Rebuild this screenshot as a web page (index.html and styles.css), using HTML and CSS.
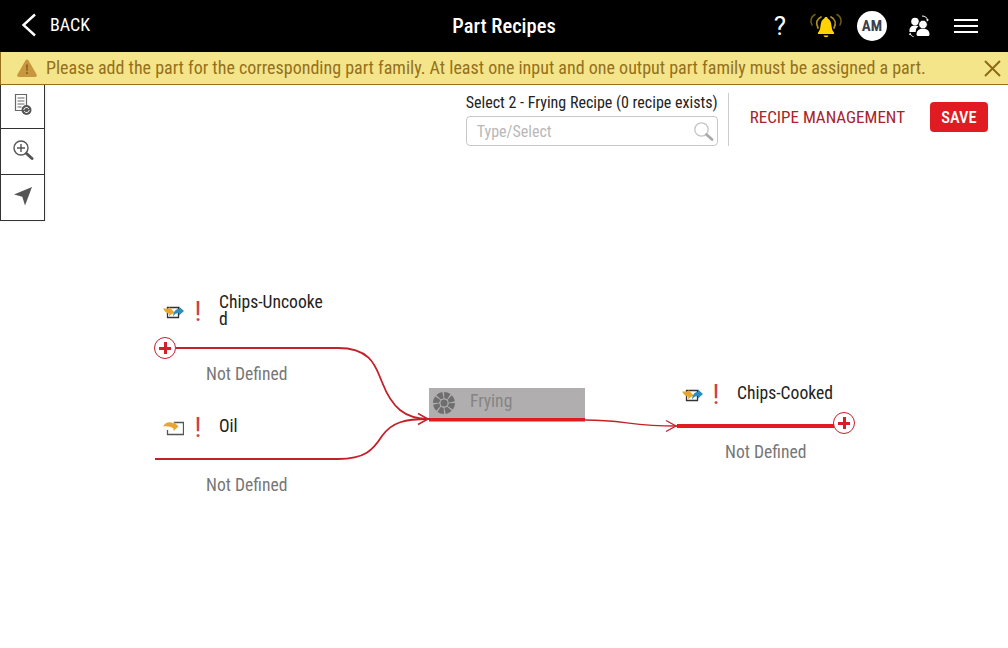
FILE: index.html
```html
<!DOCTYPE html>
<html lang="en">
<head>
<meta charset="utf-8">
<title>Part Recipes</title>
<link rel="stylesheet" href="styles.css">
</head>
<body>
<header class="topbar">
  <div class="back">
    <svg class="back-icon" width="16" height="24" viewBox="0 0 16 24"><path d="M14 1.500 2.500 12 14 22.500" fill="none" stroke="#fff" stroke-width="2.400"/></svg>
    <span class="back-label">BACK</span>
  </div>
  <h1 class="title">Part Recipes</h1>
  <div class="top-actions">
    <span class="help">?</span>
    <svg class="bell" width="34" height="26" viewBox="0 0 34 26">
      <g fill="none" stroke-linecap="round">
        <path d="M6 1.500C2 3.500.8 8 3 12M28 1.500C32 3.500 33.200 8 31 12" stroke="#6f5f1f" stroke-width="1.500"/>
        <path d="M12 4C8 6 6.500 10 9 15M22 4C26 6 27.500 10 25 15" stroke="#b2921e" stroke-width="1.700"/>
      </g>
      <path d="M17 4c1 0 1.600.7 1.800 1.600 2.500 1.200 3.300 3.900 3.700 7.400.3 2.800 1 5 2.500 6.500V21H9v-1.500c1.500-1.500 2.200-3.700 2.500-6.500.4-3.500 1.200-6.200 3.700-7.400C15.400 4.700 16 4 17 4z" fill="#ffd200"/>
      <path d="M14.500 22.500h5a2.500 1.800 0 0 1-5 0z" fill="#ffd200"/>
    </svg>
    <span class="avatar">AM</span>
    <svg class="people" width="24" height="24" viewBox="0 0 24 24">
      <circle cx="8" cy="7.500" r="3.800" fill="#fff"/>
      <path d="M2.500 18c-.5-4.500 2-6.500 5.500-6.500 1.500 0 2.500.3 3.300 1-1.700 1-2.600 2.800-2.600 5.500z" fill="#fff"/>
      <circle cx="16" cy="10.500" r="4.300" fill="#fff" stroke="#000" stroke-width=".8"/>
      <path d="M9.500 20.500c0-4 2.700-5.700 6.500-5.700s6.500 1.700 6.500 5.700c0 1-1 1.500-2 1.500h-9c-1 0-2-.5-2-1.500z" fill="#fff"/>
      <path d="M15 2c3 0 5 1.300 5.500 4M3 20c.8 1.200 1.800 2.300 3.500 2.600" fill="none" stroke="#fff" stroke-width="1"/>
      <path d="M19 5.500h3l-1.500 2zM2 21l1-2.500 1.500 2z" fill="#fff"/>
    </svg>
    <span class="burger"><i></i><i></i><i></i></span>
  </div>
</header>

<div class="banner">
  <svg class="warn" width="22" height="20" viewBox="0 0 22 20">
    <path d="M11 1.500c.7 0 1.200.4 1.600 1l8 14c.6 1.200-.1 2.500-1.400 2.500H2.800c-1.300 0-2-1.300-1.400-2.500l8-14c.4-.6.900-1 1.600-1z" fill="#c8963f"/>
    <path d="M10.200 6.500h1.600l-.3 6.500h-1zM10.200 14.200h1.600v1.800h-1.600z" fill="#7b5a17"/>
  </svg>
  <p class="banner-text"><span class="cond">Please add the part for the corresponding part family. At least one input and one output part family must be assigned a part.</span></p>
  <svg class="close" width="17" height="17" viewBox="0 0 17 17"><path d="M1 1 16 16M16 1 1 16" stroke="#8f6a14" stroke-width="2" fill="none"/></svg>
</div>

<main class="workspace">
  <div class="top-row">
    <nav class="tools">
      <button class="tool" type="button" aria-label="Recipe list">
        <svg width="20" height="24" viewBox="0 0 20 24">
          <path d="M2.500 1.500h11v16h-11z" fill="#fff" stroke="#666" stroke-width="1.200"/>
          <path d="M4.500 5h7M4.500 8h7M4.500 11h7M4.500 14h4" stroke="#666" stroke-width="1.200"/>
          <circle cx="13.500" cy="17" r="5" fill="#555"/>
          <path d="M10.800 17a2.700 2.700 0 0 1 5-1.200M16.200 17a2.700 2.700 0 0 1-5 1.200" stroke="#fff" stroke-width="1" fill="none"/>
        </svg>
      </button>
      <button class="tool" type="button" aria-label="Zoom">
        <svg width="22" height="22" viewBox="0 0 22 22">
          <circle cx="9" cy="9" r="7" fill="none" stroke="#555" stroke-width="1.400"/>
          <path d="M5 9h8M9 5v8" stroke="#555" stroke-width="1.400"/>
          <path d="M14.500 14.500l5.500 5" stroke="#555" stroke-width="3" stroke-linecap="round"/>
        </svg>
      </button>
      <button class="tool" type="button" aria-label="Navigate">
        <svg width="20" height="20" viewBox="0 0 20 20"><path d="M19 1 1 8.500l8.300 2.300L12 19.500z" fill="#555"/></svg>
      </button>
    </nav>
    <div class="controls">
      <div class="recipe-select">
        <label class="recipe-label"><span class="cond">Select 2 - Frying Recipe (0 recipe exists)</span></label>
        <div class="field">
          <span class="placeholder cond">Type/Select</span>
          <svg width="21" height="21" viewBox="0 0 21 21">
            <circle cx="8.500" cy="8.500" r="6.700" fill="none" stroke="#c4c4c4" stroke-width="1.300"/>
            <path d="M13.500 13.500l5.500 5" stroke="#aaa" stroke-width="2.800" stroke-linecap="round"/>
          </svg>
        </div>
      </div>
      <span class="divider"></span>
      <a class="manage"><span class="cond">RECIPE MANAGEMENT</span></a>
      <button class="save" type="button"><span class="cond">SAVE</span></button>
    </div>
  </div>

  <section class="diagram">
    <svg class="wires" width="1008" height="648" viewBox="0 0 1008 648">
      <g fill="none" stroke="#c4202a" stroke-width="1.800">
        <path d="M176 348H338C372 348 376 368 382 382C392 408 405 419 429 419"/>
        <path d="M155 459H338C365 459 373 450 382 436C392 422 405 419 429 419"/>
        <path d="M585 420C625 420 630 426 677 426" stroke-width="1.300"/>
        <path d="M418 413.500 428 419 418 424.500" stroke-width="1.500"/>
        <path d="M666 420.500 676 426 666 431.500" stroke-width="1.300"/>
      </g>
      <path d="M677 426H834" stroke="#e01b22" stroke-width="4"/>
      <path d="M429 419.500H585" stroke="#e01b22" stroke-width="4"/>
    </svg>

    <button class="plus plus-in" type="button" aria-label="Add input"></button>
    <button class="plus plus-out" type="button" aria-label="Add output"></button>

    <div class="node node-chips">
      <svg class="part-icon" width="21" height="16" viewBox="0 0 21 16">
        <path d="M4.500 3.500h11v10h-11z" fill="#fff" stroke="#333" stroke-width="1.300"/>
        <path d="M0 4.500h6L6.500 3l5 5.500-5.500 3.500.3-2.500C4 9.500 1.500 7.500 0 4.500z" fill="#e8a52f"/>
        <path d="M10 12.500C10.500 7.500 12.500 5 16 5V2.500L21 7l-5 4.500V9c-2.500 0-4.500 1-6 3.500z" fill="#2a8dbd"/>
      </svg>
      <span class="alert">!</span>
      <span class="part-name name-wrap cond">Chips-Uncooke<br>d</span>
    </div>
    <span class="undef undef-1 cond">Not Defined</span>

    <div class="node node-oil">
      <svg class="part-icon" width="21" height="16" viewBox="0 0 21 16">
        <path d="M11 2.500h9.500v12H4.500V10" fill="none" stroke="#555" stroke-width="1.300"/>
        <path d="M0 6.500C2 2.500 7 1 10.500 3.500V1.500L15.500 6.500 10.500 11V8.500C8 6.500 4 6 0 6.500z" fill="#e8a52f"/>
      </svg>
      <span class="alert">!</span>
      <span class="part-name cond">Oil</span>
    </div>
    <span class="undef undef-2 cond">Not Defined</span>

    <div class="process">
      <svg width="24" height="24" viewBox="0 0 24 24" class="shutter">
        <circle cx="12" cy="12" r="3.500" fill="#6e6e6e"/>
        <g fill="#6e6e6e">
          <path d="M12 1a11 11 0 0 1 6.500 2.100L15 8.500c-.8-.7-1.700-1.200-2.700-1.400z"/>
          <path d="M12 1a11 11 0 0 1 6.500 2.100L15 8.500c-.8-.7-1.700-1.200-2.700-1.400z" transform="rotate(45 12 12)"/>
          <path d="M12 1a11 11 0 0 1 6.500 2.100L15 8.500c-.8-.7-1.700-1.200-2.700-1.400z" transform="rotate(90 12 12)"/>
          <path d="M12 1a11 11 0 0 1 6.500 2.100L15 8.500c-.8-.7-1.700-1.200-2.700-1.400z" transform="rotate(135 12 12)"/>
          <path d="M12 1a11 11 0 0 1 6.500 2.100L15 8.500c-.8-.7-1.700-1.200-2.700-1.400z" transform="rotate(180 12 12)"/>
          <path d="M12 1a11 11 0 0 1 6.500 2.100L15 8.500c-.8-.7-1.700-1.200-2.700-1.400z" transform="rotate(225 12 12)"/>
          <path d="M12 1a11 11 0 0 1 6.500 2.100L15 8.500c-.8-.7-1.700-1.200-2.700-1.400z" transform="rotate(270 12 12)"/>
          <path d="M12 1a11 11 0 0 1 6.500 2.100L15 8.500c-.8-.7-1.700-1.200-2.700-1.400z" transform="rotate(315 12 12)"/>
        </g>
      </svg>
      <span class="process-name cond">Frying</span>
    </div>

    <div class="node node-cooked">
      <svg class="part-icon" width="21" height="16" viewBox="0 0 21 16">
        <path d="M4.500 3.500h11v10h-11z" fill="#fff" stroke="#333" stroke-width="1.300"/>
        <path d="M0 4.500h6L6.500 3l5 5.500-5.500 3.500.3-2.500C4 9.500 1.500 7.500 0 4.500z" fill="#e8a52f"/>
        <path d="M10 12.500C10.500 7.500 12.500 5 16 5V2.500L21 7l-5 4.500V9c-2.500 0-4.500 1-6 3.500z" fill="#2a8dbd"/>
      </svg>
      <span class="alert">!</span>
      <span class="part-name cond">Chips-Cooked</span>
    </div>
    <span class="undef undef-3 cond">Not Defined</span>
  </section>
</main>
</body>
</html>
```

FILE: styles.css
```css
* { box-sizing: border-box; }

html, body {
  margin: 0;
  padding: 0;
  height: 100%;
  overflow: hidden;
  background: #fff;
  font-family: Roboto, "Liberation Sans", sans-serif;
}

.cond {
  display: inline-block;
  font-stretch: 75%;
  white-space: nowrap;
}

.topbar {
  height: 52px;
  background: #000;
  color: #fff;
  display: grid;
  grid-template-columns: 1fr auto 1fr;
  align-items: center;
  padding: 0 30px;
}

.back { display: flex; align-items: center; gap: 13px; margin: -3px 0 0 -9px; }
.back-label { font-size: 18px; font-stretch: 75%; }

.title {
  margin: 0;
  font-size: 20.500px;
  font-weight: 500;
  font-stretch: 75%;
}

.top-actions { display: flex; align-items: center; justify-content: flex-end; }
.help { font-size: 26px; width: 14px; text-align: center; margin-right: 22px; line-height: 28px; }
.bell { margin-right: 14px; }
.avatar {
  width: 30px;
  height: 30px;
  border-radius: 50%;
  background: #fff;
  color: #38404e;
  font-size: 15px;
  font-weight: 700;
  font-stretch: 75%;
  display: flex;
  align-items: center;
  justify-content: center;
  margin-right: 20px;
}
.people { margin-right: 23px; }
.burger { display: flex; flex-direction: column; gap: 4px; width: 24px; }
.burger i { display: block; height: 2px; background: #fff; }

.banner {
  height: 33px;
  background: #f5e58a;
  border-left: 1px solid #94701c;
  border-bottom: 1px solid #94701c;
  display: flex;
  align-items: center;
  padding: 0 7px 0 15px;
  color: #94701c;
}
.warn { flex: none; margin-right: 8px; }
.banner-text { flex: 1; margin: 0; font-size: 18px; line-height: 30px; }
.close { flex: none; }

.workspace { position: relative; height: 563px; }
.top-row { display: flex; justify-content: space-between; align-items: flex-start; }

.tools { display: flex; flex-direction: column; width: 45px; }
.tool {
  width: 45px;
  height: 46px;
  padding: 0 0 4px 1px;
  background: #fff;
  border: 1px solid #333;
  border-top: 0;
  display: flex;
  align-items: center;
  justify-content: center;
  box-shadow: 1px 0 2px rgba(0,0,0,.08);
}
.tool:first-child { height: 44px; }

.controls { display: flex; align-items: flex-start; padding: 8px 20px 0 0; }
.recipe-select { width: 252px; }
.recipe-label { display: block; font-size: 16px; line-height: 20px; color: #222; height: 23px; }
.field {
  width: 252px;
  height: 30px;
  border: 1px solid #c8c8c8;
  border-radius: 4px;
  display: flex;
  align-items: center;
  justify-content: space-between;
  padding: 0 3px 0 10px;
}
.placeholder { font-size: 16px; color: #b8b8b8; }
.divider { width: 1px; height: 53px; background: #ccc; margin: 0 21px 0 10px; }
.manage {
  color: #a9232a;
  font-size: 17px;
  line-height: 30px;
  margin: 9px 25px 0 0;
}
.save {
  width: 58px;
  height: 30px;
  margin-top: 9px;
  padding: 0;
  border: 0;
  border-radius: 4px;
  background: #e01b22;
  color: #fff;
  font-family: inherit;
  font-size: 16.500px;
  font-weight: 500;
}

.diagram { position: absolute; inset: -85px 0 0 0; pointer-events: none; }
.wires { position: absolute; left: 0; top: 0; }

.plus {
  position: absolute;
  width: 22px;
  height: 22px;
  padding: 0;
  border: 1.500px solid #c4202a;
  border-radius: 50%;
  background:
    linear-gradient(#d81f26, #d81f26) center / 12px 3px no-repeat,
    linear-gradient(#d81f26, #d81f26) center / 3px 12px no-repeat,
    #fff;
}
.plus-in { left: 154px; top: 337px; }
.plus-out { left: 833px; top: 412px; }

.node { position: absolute; display: flex; align-items: center; height: 36px; }
.node-chips { left: 163px; top: 294px; }
.node-oil { left: 163px; top: 410px; }
.node-cooked { left: 682px; top: 377px; }

.part-icon { flex: none; }
.alert {
  width: 28px;
  flex: none;
  text-align: center;
  color: #c9404d;
  font-size: 27px;
  font-weight: 400;
  line-height: 36px;
}
.node-cooked .alert { margin-left: -1px; }
.part-name { font-size: 17.600px; line-height: 18px; color: #222; margin: -4px 0 0 7px; }
.node-chips .part-name { line-height: 17px; margin-top: -3px; }

.undef { position: absolute; color: #777; font-size: 17.600px; line-height: 20px; }
.undef-1 { left: 206px; top: 364px; }
.undef-2 { left: 206px; top: 475px; }
.undef-3 { left: 725px; top: 442px; }

.process {
  position: absolute;
  left: 429px;
  top: 388px;
  width: 156px;
  height: 30px;
  background: #b0aeae;
  display: flex;
  align-items: center;
  padding-left: 3px;
}
.shutter { flex: none; }
.process-name { font-size: 17.600px; color: #858585; margin-left: 14px; margin-top: -4px; }
```
